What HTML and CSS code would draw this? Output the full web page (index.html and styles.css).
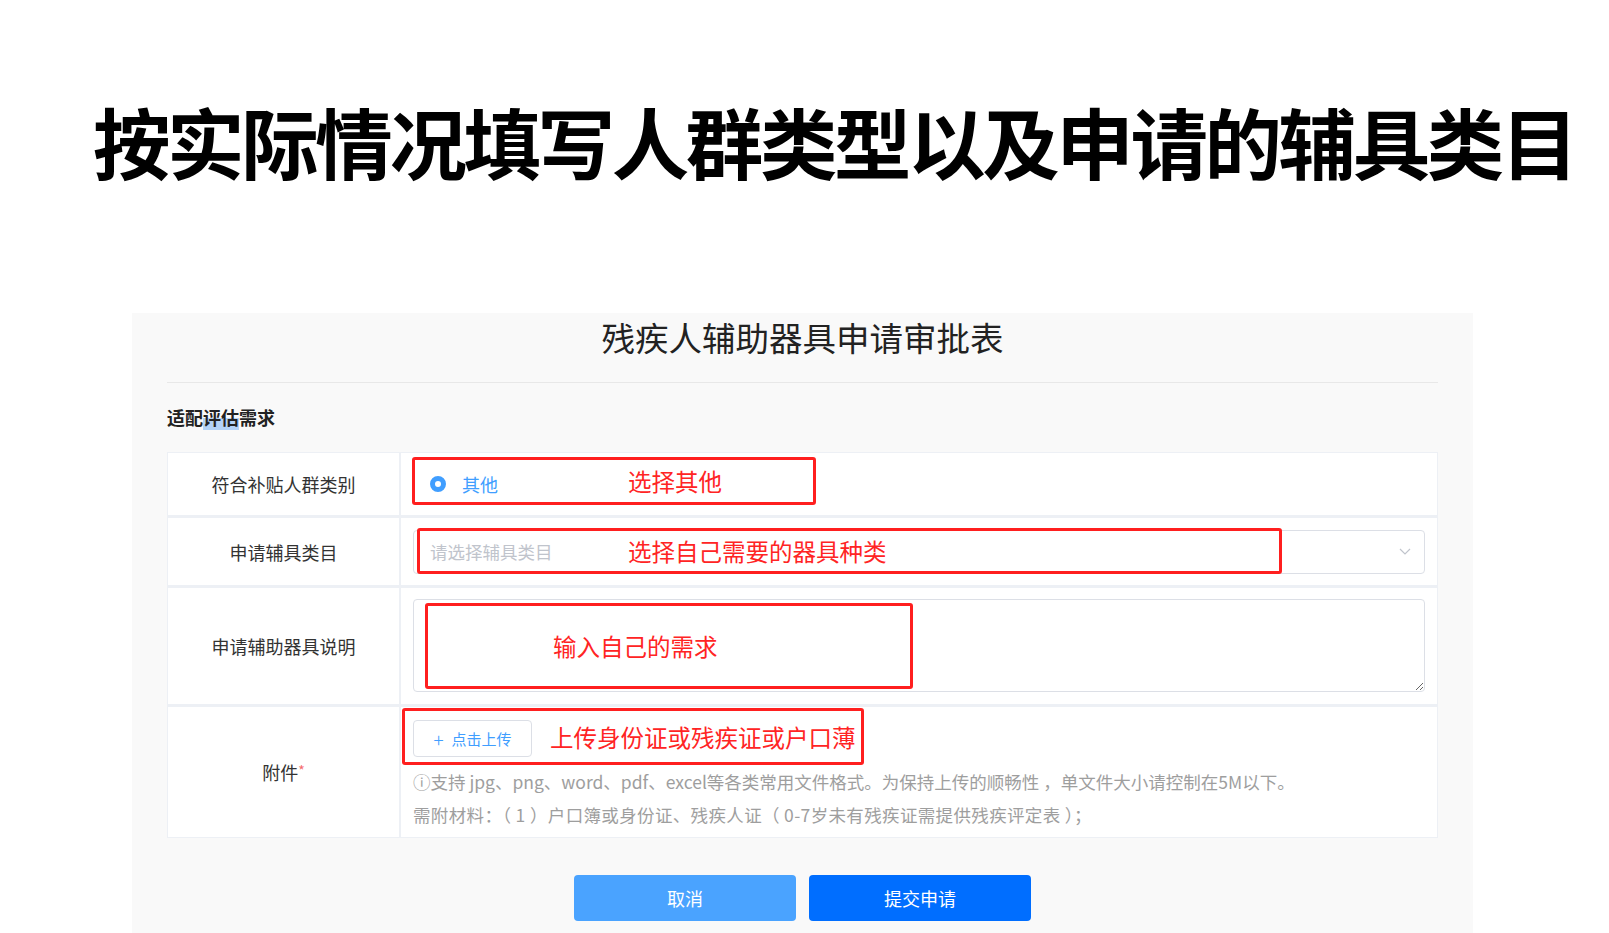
FILE: index.html
```html
<!DOCTYPE html>
<html lang="zh-CN">
<head>
<meta charset="utf-8">
<title>残疾人辅助器具申请审批表</title>
<link rel="stylesheet" href="styles.css">
</head>
<body>
<div class="hero">
  <h1 class="hero-title">按实际情况填写人群类型以及申请的辅具类目</h1>
</div>
<div class="panel">
  <div class="title">残疾人辅助器具申请审批表</div>
  <div class="divider"></div>
  <div class="section-title">适配<span class="sel">评估</span>需求</div>
  <div class="form-table">
    <div class="label">符合补贴人群类别</div>
    <div class="value value-radio">
      <label class="radio"><span class="radio-dot"></span><span class="radio-text">其他</span></label>
      <div class="mark mark1"><span>选择其他</span></div>
    </div>

    <div class="label">申请辅具类目</div>
    <div class="value value-select">
      <div class="select">
        <span class="placeholder">请选择辅具类目</span>
        <svg class="chevron" width="12" height="7" viewBox="0 0 12 7"><polyline points="1,1 6,6 11,1" fill="none" stroke="#c0c4cc" stroke-width="1.2"/></svg>
      </div>
      <div class="mark mark2"><span>选择自己需要的器具种类</span></div>
    </div>

    <div class="label">申请辅助器具说明</div>
    <div class="value value-text">
      <textarea class="textarea"></textarea>
      <div class="mark mark3"><span>输入自己的需求</span></div>
    </div>

    <div class="label">附件<span class="req">*</span></div>
    <div class="value value-upload">
      <button class="upload"><span class="plus">+</span>点击上传</button>
      <div class="hint">
        <p>ⓘ支持 jpg、png、word、pdf、excel等各类常用文件格式。为保持上传的顺畅性 ，单文件大小请控制在5M以下。</p>
        <p class="hint-2">需附材料：（ 1 ）户口簿或身份证、残疾人证（ 0-7岁未有残疾证需提供残疾评定表 ）；</p>
      </div>
      <div class="mark mark4"><span>上传身份证或残疾证或户口薄</span></div>
    </div>
  </div>
  <div class="actions">
    <button class="btn btn-cancel">取消</button>
    <button class="btn btn-submit">提交申请</button>
  </div>
</div>
</body>
</html>
```
FILE: styles.css
```css
html, body {
  margin: 0;
  padding: 0;
  background: #ffffff;
  overflow: hidden;
}
body {
  font-family: "Noto Sans CJK SC", "Noto Sans", sans-serif;
  color: #333;
}
.hero {
  height: 313px;
  box-sizing: border-box;
  padding: 95px 0 0 93px;
}
.hero-title {
  margin: 0;
  font-size: 77.5px;
  line-height: 90px;
  font-weight: 700;
  letter-spacing: -3.4px;
  color: #000;
  white-space: nowrap;
}
.panel {
  margin-left: 132px;
  width: 1341px;
  height: 620px;
  box-sizing: border-box;
  background: #f9f9f9;
  padding: 0 35px;
}
.title {
  font-size: 33.5px;
  line-height: 48px;
  text-align: center;
  color: #222;
}
.divider {
  margin-top: 21px;
  height: 1px;
  background: #e8e8e8;
}
.section-title {
  margin-top: 22px;
  font-size: 18px;
  line-height: 24px;
  font-weight: 700;
  color: #222;
}
.sel {
  background: linear-gradient(to bottom, transparent 55%, #b3d3f7 55%);
}
.form-table {
  margin-top: 23px;
  display: grid;
  grid-template-columns: 231px 1fr;
  grid-template-rows: 62px 67px 116px 130px;
  column-gap: 2px;
  row-gap: 3px;
  padding: 1px;
  background: #edf0f5;
}
.label {
  background: #fff;
  display: flex;
  align-items: center;
  justify-content: center;
  font-size: 18px;
  color: #333;
}
.req {
  color: #f56c6c;
  font-size: 14px;
  align-self: flex-start;
  margin-top: 53px;
}
.value {
  background: #fff;
  position: relative;
  padding: 0 12px;
  display: flex;
  flex-direction: column;
  justify-content: center;
}
.radio {
  display: flex;
  align-items: center;
  margin-left: 17px;
}
.radio-dot {
  width: 16px;
  height: 16px;
  box-sizing: border-box;
  border-radius: 50%;
  border: 5px solid #409eff;
  background: #fff;
}
.radio-text {
  margin-left: 16px;
  font-size: 18px;
  color: #409eff;
}
.select {
  height: 44px;
  box-sizing: border-box;
  border: 1px solid #dcdfe6;
  border-radius: 4px;
  display: flex;
  align-items: center;
  justify-content: space-between;
  padding: 0 13px 0 16px;
}
.placeholder {
  font-size: 17.5px;
  color: #c0c4cc;
}
.value-text {
  justify-content: flex-start;
  padding-top: 11px;
}
.textarea {
  height: 93px;
  box-sizing: border-box;
  border: 1px solid #dcdfe6;
  border-radius: 4px;
  background: #fff;
  margin: 0;
  width: 100%;
  resize: vertical;
}
.value-upload {
  justify-content: flex-start;
  align-items: flex-start;
  padding-top: 13px;
}
.upload {
  width: 119px;
  height: 37px;
  box-sizing: border-box;
  border: 1px solid #dcdfe6;
  border-radius: 4px;
  background: #fff;
  color: #409eff;
  font-family: "Noto Sans CJK SC", sans-serif;
  font-size: 15px;
  display: flex;
  align-items: center;
  justify-content: center;
  padding: 0;
}
.plus {
  font-size: 19px;
  font-weight: 300;
  margin-right: 8px;
  line-height: 1;
}
.hint {
  margin-top: 8px;
  font-size: 17.5px;
  line-height: 33px;
  color: #9e9e9e;
}
.hint p {
  margin: 0;
  white-space: nowrap;
}
.hint-2 {
  letter-spacing: 0.35px;
}
.mark {
  position: absolute;
  box-sizing: border-box;
  border: 3px solid #ff1f1f;
  border-radius: 3px;
  display: flex;
  align-items: center;
  color: #ff2424;
  font-size: 23.5px;
  white-space: nowrap;
}
.mark1 { left: 11px; top: 4px; width: 404px; height: 48px; padding-left: 213px; }
.mark2 { left: 16px; top: 10px; width: 865px; height: 46px; padding-left: 208px; }
.mark3 { left: 24px; top: 15px; width: 488px; height: 86px; padding-left: 125px; }
.mark4 { left: 1px; top: 1px; width: 462px; height: 57px; padding-left: 145px; }
.actions {
  margin-top: 37px;
  display: flex;
  justify-content: center;
  gap: 13px;
}
.btn {
  width: 222px;
  height: 46px;
  border: none;
  border-radius: 4px;
  color: #fff;
  font-family: "Noto Sans CJK SC", sans-serif;
  font-size: 18px;
  padding: 0;
}
.btn-cancel { background: #4aa3ff; }
.btn-submit { background: #006eff; }
```
